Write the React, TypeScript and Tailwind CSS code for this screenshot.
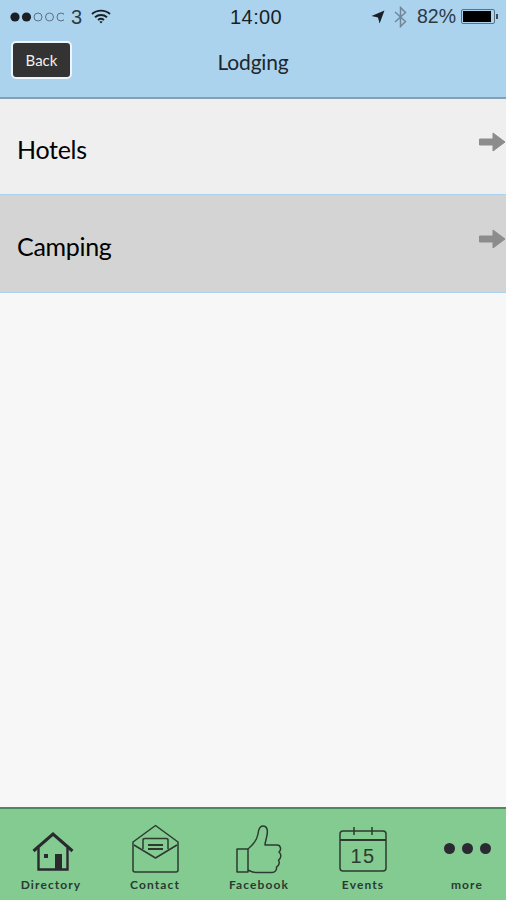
// Status bar bits
function Signal() {
  return (
    <svg width="54" height="12" viewBox="0 0 54 12">
      {[0, 1].map((i) => (
        <circle key={i} cx={5 + i * 11.5} cy="6" r="4.6" fill="#1a1f25" />
      ))}
      {[2, 3, 4].map((i) => (
        <circle key={i} cx={5 + i * 11.5} cy="6" r="4" fill="none" stroke="#5d7080" strokeWidth="1" />
      ))}
    </svg>
  );
}

function Wifi() {
  return (
    <svg width="20" height="15" viewBox="0 0 20 15" fill="none" stroke="#1a1f25" strokeWidth="1.9">
      <path d="M1 5 C6 0.5 14 0.5 19 5" />
      <path d="M4 8.2 C7.5 5.2 12.5 5.2 16 8.2" />
      <path d="M7 11 C8.8 9.6 11.2 9.6 13 11" />
      <path d="M10 14.6 L8.4 12.8 C9.4 12.2 10.6 12.2 11.6 12.8 Z" fill="#1a1f25" stroke="none" />
    </svg>
  );
}

function LocationArrow() {
  return (
    <svg width="14" height="14" viewBox="0 0 14 14">
      <path d="M13.5 0.5 L0.5 6 L7 7.4 L8.6 13.5 Z" fill="#1a1f25" />
    </svg>
  );
}

function Bluetooth() {
  return (
    <svg width="13" height="22" viewBox="0 0 13 22" fill="none" stroke="#6f8799" strokeWidth="1.5">
      <path d="M1 6 L11.5 15.5 L6.5 20.5 L6.5 1.5 L11.5 6.5 L1 16" />
    </svg>
  );
}

function Battery() {
  return (
    <div className="flex items-center">
      <div className="h-[15px] w-[34px] rounded-[2px] border border-[#5d7080] p-px">
        <div className="h-full w-[28px] bg-black" />
      </div>
      <div className="ml-px h-[5px] w-[2px] bg-[#3d4a55]" />
    </div>
  );
}

function RowArrow() {
  return (
    <svg width="28" height="20" viewBox="0 0 28 20" className="mt-[-9px]">
      <path d="M1.5 7 L15 7 L15 1 L27 10 L15 19 L15 13 L1.5 13 Z" fill="#8c8c8c" stroke="#8c8c8c" strokeLinejoin="round" />
    </svg>
  );
}

// Tab bar icons
function HomeIcon() {
  return (
    <svg width="42" height="40" viewBox="0 0 42 40" fill="none" stroke="#2a2a2e" strokeWidth="2.4">
      <path d="M1.5 19 L21 2 L40.5 19" strokeWidth="3" />
      <path d="M6.5 16 L6.5 37.5 L35.5 37.5 L35.5 16" />
      <rect x="23" y="22" width="7" height="15" fill="#2a2a2e" stroke="none" />
      <rect x="12" y="22" width="4" height="4" fill="#2a2a2e" stroke="none" />
    </svg>
  );
}

function MailIcon() {
  return (
    <svg width="50" height="50" viewBox="0 0 50 50" fill="none" stroke="#2c3a30" strokeWidth="1.5" strokeLinejoin="round">
      <path d="M2 18 L24.5 1.5 L47 18 L47 46 Q47 48 45 48 L4 48 Q2 48 2 46 Z" />
      <path d="M3 21 L24.5 34 L46 21" />
      <path d="M12 25 L12 16 Q12 14.5 14 14.5 L35 14.5 Q37 14.5 37 16 L37 25" />
      <path d="M17 21 L32 21 M17 25 L32 25" strokeWidth="1.8" />
    </svg>
  );
}

function ThumbIcon() {
  return (
    <svg width="46" height="49" viewBox="0 0 46 49" fill="none" stroke="#2c3a30" strokeWidth="1.5" strokeLinejoin="round">
      <path d="M1 24 L12 24 L12 47 L1 47 Z" />
      <path d="M12 24 C17 20 21 15 22 9 C22.5 4 24 1 27 1 C31 1 32 5 31 10 C30.5 14 29 17 29 20 L41 20 C45 20 45.5 25 43 27 C45.5 29 45.5 33 42.5 35 C44 37.5 43 41 40.5 42 C41 45 39 47.5 36 47.5 L20 47.5 C16 47.5 14 46 12 45" />
    </svg>
  );
}

function CalendarIcon() {
  return (
    <svg width="48" height="46" viewBox="0 0 48 46" fill="none" stroke="#2c3a30" strokeWidth="1.5">
      <rect x="1" y="5" width="46" height="40" rx="3" />
      <path d="M1 14 L47 14" strokeWidth="2" />
      <path d="M15 1 L15 9 M33 1 L33 9" />
      <text x="24" y="37" textAnchor="middle" fontSize="20" fontFamily="'Liberation Sans', sans-serif" fill="#2c3a30" stroke="none" letterSpacing="1.5">15</text>
    </svg>
  );
}

function MoreIcon() {
  return (
    <div className="flex h-[12px] gap-[7px]">
      <span className="size-[11px] rounded-full bg-[#2a2a32]" />
      <span className="size-[11px] rounded-full bg-[#2a2a32]" />
      <span className="size-[11px] rounded-full bg-[#2a2a32]" />
    </div>
  );
}

const tabs = [
  { label: 'Directory', icon: <HomeIcon />, box: 'pt-[23px] pl-[4px]' },
  { label: 'Contact', icon: <MailIcon />, box: 'pt-[15px] pl-[2px]' },
  { label: 'Facebook', icon: <ThumbIcon />, box: 'pt-[16px]' },
  { label: 'Events', icon: <CalendarIcon />, box: 'pt-[17px]' },
  { label: 'more', icon: <MoreIcon />, box: 'pt-[34px]' },
];

const rows = [
  { name: 'Hotels', bg: 'bg-[#efefef]', h: 'h-[96px]' },
  { name: 'Camping', bg: 'bg-[#d4d4d4]', h: 'h-[98px]' },
];

export default function App() {
  return (
    <div className="flex h-[900px] w-[506px] flex-col overflow-hidden bg-[#f7f7f7] font-['Lato','Liberation_Sans',sans-serif] text-black">
      {/* Header */}
      <div className="h-[99px] shrink-0 border-b-2 border-[#85a0b5] bg-[#abd3ee]">
        <div className="flex h-[33px] items-center pl-[10px] pr-[8px] text-[#1a1f25]">
          <Signal />
          <span className="ml-[7px] font-['Liberation_Sans',sans-serif] text-[20px] text-[#2c3a46]">3</span>
          <span className="ml-[9px]"><Wifi /></span>
          <span className="ml-[97px] w-[96px] text-center font-['Liberation_Sans',sans-serif] text-[20px] tracking-[0.4px]">14:00</span>
          <span className="ml-auto"><LocationArrow /></span>
          <span className="ml-[9px]"><Bluetooth /></span>
          <span className="ml-[10px] font-['Liberation_Sans',sans-serif] text-[19.5px] text-[#2c3a46]">82%</span>
          <span className="ml-[5px]"><Battery /></span>
        </div>
        <div className="relative flex h-[64px] items-start justify-center pt-[14px]">
          <button className="absolute left-[11px] top-[8px] flex h-[38px] w-[61px] items-center justify-center rounded-[5px] border-2 border-[#eef5fa] bg-[#333333] text-[15px] text-[#f0f0f0]">
            Back
          </button>
          <span className="text-[21px] leading-[30px] tracking-[-0.2px] text-[#20262c]">Lodging</span>
        </div>
      </div>

      {/* List */}
      <div className="flex-1">
        {rows.map((r) => (
          <div key={r.name} className={`flex ${r.h} items-center justify-between border-b border-[#abd3ee] pl-[17px] ${r.bg}`}>
            <span className="pt-[6px] text-[25px] leading-none tracking-[-0.3px]">{r.name}</span>
            <RowArrow />
          </div>
        ))}
      </div>

      {/* Tab bar */}
      <div className="-ml-px flex h-[93px] shrink-0 border-t-2 border-[#4e8a5c] bg-[#84cb92]">
        {tabs.map((t) => (
          <div key={t.label} className={`relative flex w-[104px] shrink-0 flex-col items-center ${t.box}`}>
            {t.icon}
            <span className="absolute bottom-[9px] left-0 w-[104px] text-center text-[12px] font-bold leading-none tracking-[1.1px] text-[#2a3a30]">{t.label}</span>
          </div>
        ))}
      </div>
    </div>
  );
}
